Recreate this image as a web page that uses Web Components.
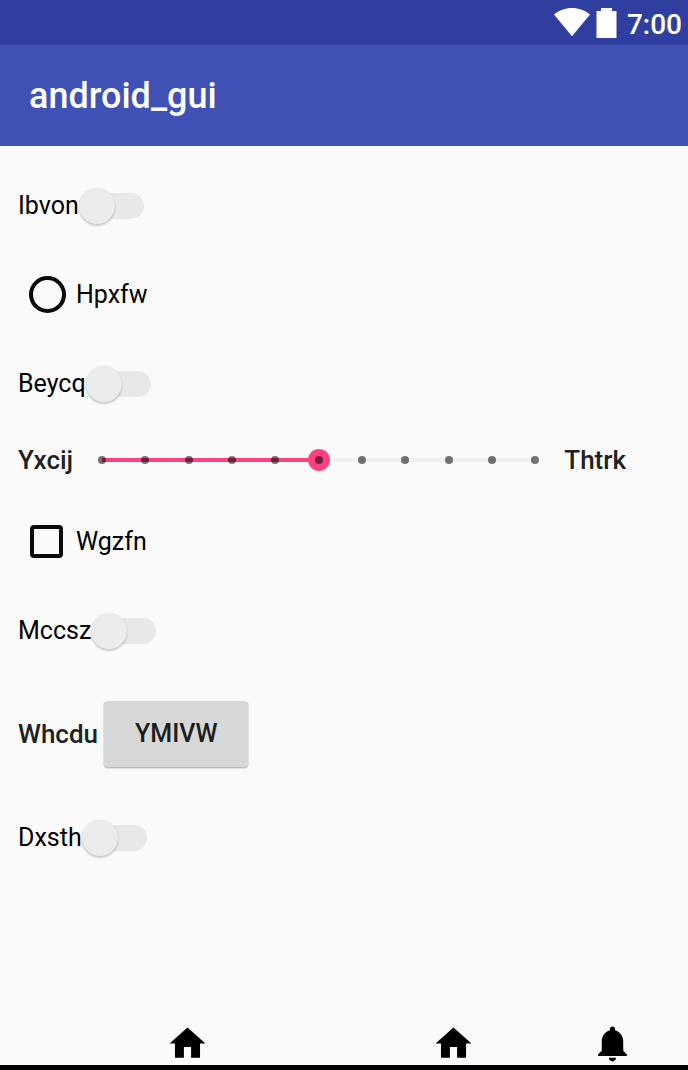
<!DOCTYPE html>
<html lang="en">
<head>
<meta charset="utf-8">
<meta name="viewport" content="width=device-width, initial-scale=1">
<title>android_gui</title>
<style>
  html { height: 100%; }
  body { margin: 0; min-height: 100%; display: flex; flex-direction: column; background: #fafafa; color: #000; font-family: Roboto, "Noto Sans", sans-serif; font-size: 25px; line-height: 32px; }
  app-screen { flex: 1; }
</style>
</head>
<body>
<app-screen></app-screen>
<script>
const define = (name, html, setup) => {
  const template = document.createElement('template');
  template.innerHTML = html;
  customElements.define(name, class extends HTMLElement {
    constructor() {
      super();
      this.attachShadow({ mode: 'open' }).append(template.content.cloneNode(true));
    }
    connectedCallback() { if (setup) setup(this, this.shadowRoot); }
  });
};

define('status-bar', `
  <style>
    :host { display: flex; align-items: center; justify-content: flex-end; height: 45px; padding-right: 6px; background: #303f9f; color: #fff; font-size: 28px; font-weight: 500; }
    svg { display: block; fill: #fff; margin-right: 6px; }
    .battery { margin-right: 10px; }
    time { padding-top: 4px; }
  </style>
  <svg width="36" height="30" viewBox="0 0 36 30" role="img" aria-label="Wi-Fi"><path d="M0 6.4C5 2.3 11.3 0 18 0s13 2.3 18 6.400L18 28.200z"/></svg>
  <svg class="battery" width="21" height="30" viewBox="0 0 21 30" role="img" aria-label="Battery"><path d="M5 0h11v3h4.500v27H.5V3H5z"/></svg>
  <time>7:00</time>`);

define('app-bar', `
  <style>
    :host { display: flex; align-items: center; height: 101px; padding: 0 29px; background: #3f51b5; color: #fff; }
    h1 { margin: 0; font-size: 36px; line-height: 44px; font-weight: 500; }
  </style>
  <h1><slot></slot></h1>`);

define('form-row', `
  <style>
    :host { display: flex; align-items: center; height: 89px; padding: 0 18px; }
    :host([kind="button"]) { height: 118px; gap: 6px; }
    :host([kind="slider"]) { height: 64px; margin-bottom: 5px; padding-right: 62px; gap: 18px; }
  </style>
  <slot></slot>`);

define('toggle-switch', `
  <style>
    :host { display: block; }
    label { display: flex; align-items: center; }
    input { appearance: none; position: relative; width: 65px; height: 36px; margin: 0; }
    input::before { content: ""; position: absolute; inset: 5px 0 5px 8px; border-radius: 13px; background: #e8e8e8; }
    input::after { content: ""; position: absolute; left: 0; top: 0; width: 36px; height: 36px; border-radius: 50%; background: #ebebeb; box-shadow: 0 2px 2px rgba(0,0,0,.18), 0 0 2px rgba(0,0,0,.08); }
    input:checked::after { left: 29px; background: #ff4081; }
  </style>
  <label><slot></slot><input type="checkbox" role="switch"></label>`,
  (host, root) => { root.querySelector('input').setAttribute('aria-label', host.textContent.trim()); });

define('choice-field', `
  <style>
    :host { display: block; }
    label { display: flex; align-items: center; gap: 10px; padding-left: 11px; }
    input { appearance: none; box-sizing: border-box; width: 37px; height: 37px; margin: 0; border: 4px solid #0a0a0a; border-radius: 50%; }
    input[type="checkbox"] { width: 33px; height: 33px; margin: 0 3px 0 1px; border-radius: 4px; }
    input:checked { background: #ff4081; }
  </style>
  <label><input type="radio"><slot></slot></label>`,
  (host, root) => {
    const input = root.querySelector('input');
    input.type = host.getAttribute('type');
    input.setAttribute('aria-label', host.textContent.trim());
  });

define('step-slider', `
  <style>
    :host { display: block; position: relative; flex: 1; height: 22px; --fill: 50%; }
    input { appearance: none; display: block; position: relative; width: 100%; height: 22px; margin: 0; background: none; }
    input::-webkit-slider-runnable-track { height: 22px; background: none; }
    input::-webkit-slider-thumb { appearance: none; width: 22px; height: 22px; border-radius: 50%; background: #ff4081; }
    .track { position: absolute; inset: 9px 11px; background: linear-gradient(to right, #ff4081 var(--fill), #f0f0f0 var(--fill)); }
    .ticks { position: absolute; inset: 7px; display: flex; justify-content: space-between; pointer-events: none; }
    .ticks i { width: 8px; height: 8px; border-radius: 50%; background: rgba(0,0,0,.54); }
  </style>
  <div class="track"></div>
  <input type="range" min="0" max="10" value="5">
  <div class="ticks"></div>`,
  (host, root) => {
    const input = root.querySelector('input');
    input.setAttribute('aria-label', host.getAttribute('label'));
    root.querySelector('.ticks').innerHTML = '<i></i>'.repeat(11);
    input.addEventListener('input', () => host.style.setProperty('--fill', input.value * 10 + '%'));
  });

define('field-label', `
  <style>:host { display: block; font-size: 26px; font-weight: 500; color: #212121; }</style>
  <slot></slot>`);

define('raised-button', `
  <style>
    :host { display: block; }
    button { display: block; padding: 16px 31px 17px; border: 0; border-radius: 4px; background: #d6d8d7; color: #1c1c1c; font: 500 25px/33px Roboto, "Noto Sans", sans-serif; text-transform: uppercase; box-shadow: 0 1px 2px rgba(0,0,0,.35); }
  </style>
  <button type="button"><slot></slot></button>`);

define('tab-icon', `
  <style>
    :host { display: flex; justify-content: center; }
    button { display: block; padding: 0; border: 0; background: none; }
    svg { display: block; width: 43px; height: 43px; }
  </style>
  <button type="button"><svg viewBox="0 0 24 24" aria-hidden="true"><path/></svg></button>`,
  (host, root) => {
    const paths = {
      home: 'M10 20v-6h4v6h5v-8h3L12 3 2 12h3v8z',
      bell: 'M12 22c1.100 0 2-.9 2-2h-4c0 1.100.89 2 2 2zm6-6v-5c0-3.070-1.640-5.640-4.500-6.320V4c0-.83-.67-1.500-1.500-1.500s-1.500.67-1.500 1.500v.68C7.630 5.360 6 7.920 6 11v5l-2 2v1h16v-1l-2-2z'
    };
    root.querySelector('path').setAttribute('d', paths[host.getAttribute('icon')]);
    root.querySelector('button').setAttribute('aria-label', host.getAttribute('label'));
  });

define('bottom-tabs', `
  <style>
    :host { display: grid; grid-template-columns: 366fr 166fr 152fr; padding-left: 4px; border-bottom: 5px solid #000; }
  </style>
  <slot></slot>`);

define('app-screen', `
  <style>
    :host { display: flex; flex-direction: column; }
    main { flex: 1; padding-top: 15px; }
  </style>
  <status-bar></status-bar>
  <app-bar>android_gui</app-bar>
  <main>
    <form-row><toggle-switch>Ibvon</toggle-switch></form-row>
    <form-row><choice-field type="radio">Hpxfw</choice-field></form-row>
    <form-row><toggle-switch>Beycq</toggle-switch></form-row>
    <form-row kind="slider"><field-label>Yxcij</field-label><step-slider label="Yxcij to Thtrk"></step-slider><field-label>Thtrk</field-label></form-row>
    <form-row><choice-field type="checkbox">Wgzfn</choice-field></form-row>
    <form-row><toggle-switch>Mccsz</toggle-switch></form-row>
    <form-row kind="button"><field-label>Whcdu</field-label><raised-button>Ymivw</raised-button></form-row>
    <form-row><toggle-switch>Dxsth</toggle-switch></form-row>
  </main>
  <bottom-tabs>
    <tab-icon icon="home" label="Home"></tab-icon>
    <tab-icon icon="home" label="Main"></tab-icon>
    <tab-icon icon="bell" label="Notifications"></tab-icon>
  </bottom-tabs>`);
</script>
</body>
</html>
